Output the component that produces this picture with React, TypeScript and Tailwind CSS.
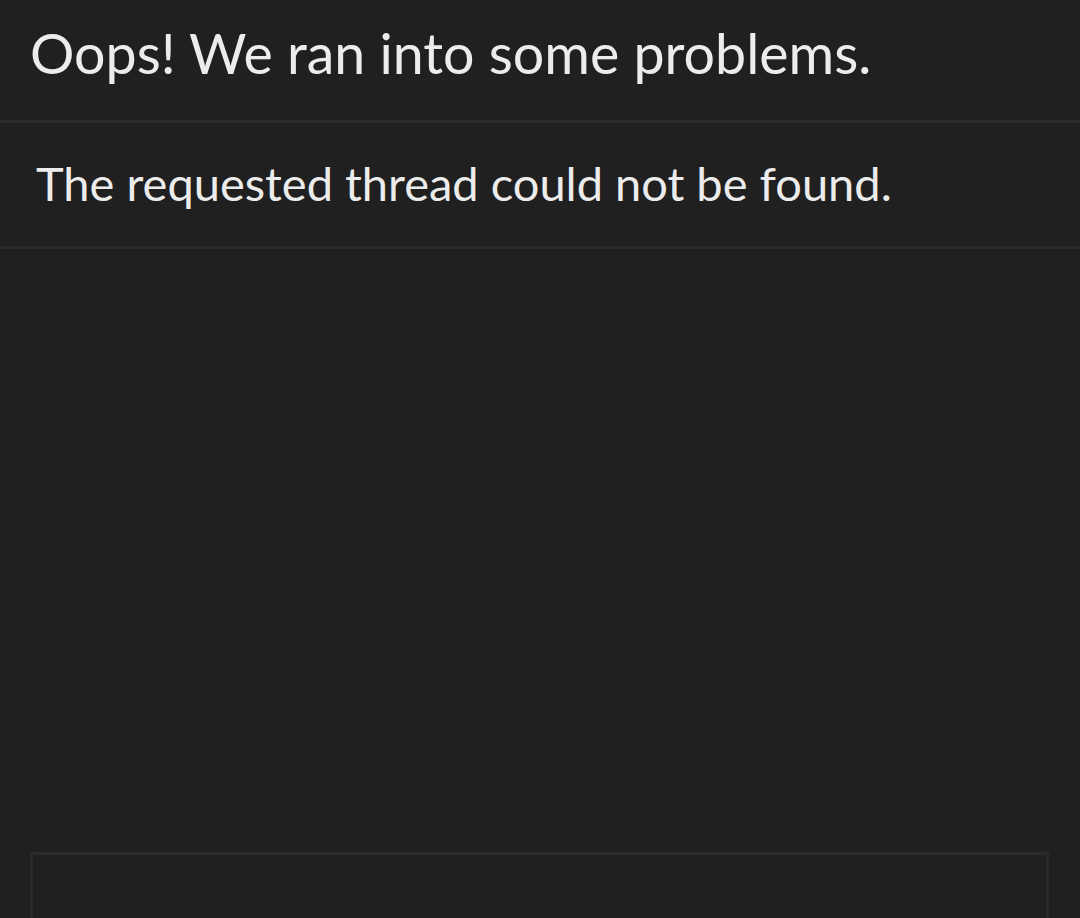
import React from 'react';

export default function App() {
  return (
    <div className="h-[918px] overflow-hidden bg-[#202020] text-[#ececec] flex flex-col" style={{ fontFamily: 'Lato, "Noto Sans", sans-serif' }}>
      <div className="h-[123px] shrink-0 flex items-center pl-[30px] border-b-[3px] border-[#2a2a2a]">
        <h1 className="text-[55.5px] leading-none pb-[14px]">Oops! We ran into some problems.</h1>
      </div>
      <div className="h-[126px] shrink-0 flex items-center pl-[36px] border-b-[3px] border-[#2a2a2a]">
        <p className="text-[47px] leading-none pb-[2px]">The requested thread could not be found.</p>
      </div>
      <div className="flex-1" />
      <div className="pl-[30px] pr-[31px]">
        <div className="h-[66px] border-[3px] border-b-0 border-[#2a2a2a]" />
      </div>
    </div>
  );
}
